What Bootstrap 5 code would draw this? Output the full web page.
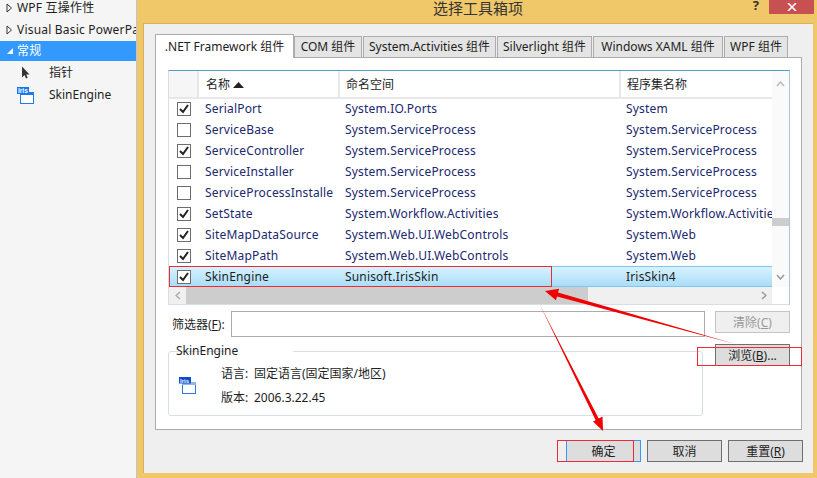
<!DOCTYPE html>
<html lang="zh"><head><meta charset="utf-8"><title>选择工具箱项</title>
<link href="https://cdn.jsdelivr.net/npm/bootstrap@5.3.0/dist/css/bootstrap.min.css" rel="stylesheet">
<script src="https://cdn.jsdelivr.net/npm/bootstrap@5.3.0/dist/js/bootstrap.bundle.min.js"></script>
<style>
html,body{height:478px;overflow:hidden}
body{width:817px;font:12px/16px "Noto Sans","Noto Sans CJK SC",sans-serif;color:#1e1e1e;background:#f0c869;position:relative}
.side{width:137px;flex:none;background:#f5f5f5;border-right:1px solid #c4c4c4;color:#1e1e1e;white-space:nowrap;overflow:hidden;margin-top:0;padding-top:0}
.side-row{height:22px;display:flex;align-items:center;padding-left:6px;letter-spacing:.2px}
.side-row:first-child{margin-top:-4px;height:23px}
.side-row.on{background:#3399ff;color:#fff;height:20px}
.side-tri{width:11px;flex:none;display:flex}
.side-leaf{padding-left:17px;letter-spacing:0}
.side-leaf.tall{height:23px}
.side-ico{width:32px;flex:none;display:flex}
.win{flex:1;min-width:0;padding:23px 4px 5px 6px;position:relative}
.win-title{position:absolute;top:0;left:0;right:0;height:17px;text-align:center;font-size:15px;line-height:17px;color:#333;padding-left:2px}
.win-help{position:absolute;top:-3px;right:58px;font-weight:700;font-size:13px;color:#333}
.win-close{position:absolute;top:0;right:3px;width:45px;height:14px;background:#c75050;display:flex;align-items:center;justify-content:center}
.client{height:100%;background:#efefef;border:1px solid #d8b25a;border-width:1px 0 0 1px;padding:12px 11px 0 11px}
.tabs.nav-tabs{border:0;flex-wrap:nowrap;height:21px;position:relative;z-index:1}
.tabs .nav-link{height:21px;padding:0 0;margin:0 1px 0 0;border:1px solid #acacac;border-bottom:0;border-radius:0;background:#e4e4e4;color:#1e1e1e;line-height:19px;text-align:center;font-size:12px}
.tabs .nav-link.active{height:24px;margin-top:-2px;border-color:#acacac;background:#fff;color:#1e1e1e;line-height:23px;border-bottom:0}
.panel-box{height:373px;width:647px;background:#fff;border:1px solid #acacac;padding:12px 12px 0 12px}
.lst{height:235px;width:622px;border:1px solid #569ac7;border-bottom-color:#d5dfe5;border-left-color:#d5dfe5;border-right-color:#abc6da;display:grid;grid-template-columns:1fr 17px;grid-template-rows:1fr 17px}
.grid-clip{overflow:hidden;min-width:0}
.tbl.table{table-layout:fixed;width:603px;margin:0;font-size:12px;color:#1e1e1e;--bs-table-bg:transparent}
.tbl th{height:27px;padding:1px 0 0 6px;font-weight:400;border:0;border-right:2px solid #e8e8e8;border-bottom:2px solid #e8e8e8;vertical-align:middle;white-space:nowrap}
.tbl th:first-child{background:#f6f6f6}
.tbl td{height:21px;padding:0 0 0 6px;border:0;color:#20286e;white-space:nowrap;overflow:hidden;vertical-align:middle;line-height:20px;letter-spacing:.17px}
.tbl tr>*:nth-child(2){padding-left:7px}
.tbl .chk{padding:0 0 0 1px;text-align:center}
.tbl tr.sel td{background:linear-gradient(#d9f3fe,#a8dcf8);box-shadow:inset 0 1px 0 #7fc4f4,inset 0 -1px 0 #7fc4f4;color:#1e1e1e}
.cb{display:inline-block;width:14px;height:14px;border:1px solid #6d6d6d;background:#fff;vertical-align:middle;margin-top:-1px}
.cb svg{display:block}
.sb{background:#f0f0f0;display:flex;min-height:0;min-width:0}
.sb-v{flex-direction:column;align-items:center;justify-content:flex-start;position:relative;background:#fafafa}
.sb-btn{flex:none;display:flex;align-items:center;justify-content:center}
.sb-thumb{background:#cdcdcd}
.corner{background:#fff}
.filt-wrap{display:flex;gap:10px;margin-top:6px;width:622px}
.filt-left{width:537px;flex:none}
.filt-line{display:flex;align-items:center;height:26px;padding-left:4px}
.filt-line label{width:59px;flex:none;padding-top:2px}
.filt-line .form-control{width:474px;flex:none;height:26px;border:1px solid #acacac;border-radius:0;padding:0 4px;font-size:12px;margin-right:-2px}
u{text-underline-offset:1px}
.grp{margin:6px 2px 0 0;height:73px;border:1px solid #d5dfe5;border-radius:3px;padding:0 0 0 52px;position:relative}
.grp legend{float:none;width:auto;font-size:12px;line-height:16px;margin:0 0 7px 4px;padding:0 3px;color:#1e1e1e;position:relative;left:-52px}
.grp-ico{position:absolute;left:10px;top:11px;display:flex}
.grp p{margin:0 0 8px;line-height:16px;display:flex;color:#1e1e1e}
.grp p span:first-child{width:33px;flex:none}
.sidebtns{display:flex;flex-direction:column;gap:11px;width:75px}
.vsbtn.btn{width:75px;height:22px;padding:1px 0 0;border:1px solid #707070;border-radius:0;background:#ddd;color:#1e1e1e;font-size:12px;line-height:18px}
.vsbtn.btn:disabled,.vsbtn.btn.disabled{background:#efefef;border-color:#c4c4c4;color:#9a9a9a;opacity:1}
.foot{display:flex;justify-content:flex-end;gap:6px;margin-top:10px;width:648px}
.vsbtn.btn.focus-btn{border-color:#3399ff}
.marks{position:absolute;left:0;top:0;width:817px;height:478px;pointer-events:none}
</style></head>
<body class="d-flex">
<aside class="side">
  <div class="side-row"><span class="side-tri"><svg width="7" height="10"><path d="M1 1v8l4.500-4z" fill="#fff" stroke="#333"/></svg></span>WPF 互操作性</div>
  <div class="side-row"><span class="side-tri"><svg width="7" height="10"><path d="M1 1v8l4.500-4z" fill="#fff" stroke="#333"/></svg></span>Visual Basic PowerPacks</div>
  <div class="side-row on"><span class="side-tri"><svg width="8" height="8"><path d="M1 7h6V1z" fill="#fff"/></svg></span>常规</div>
  <div class="side-row side-leaf tall"><span class="side-ico"><svg width="16" height="16"><path d="M5 1.500v11l2.500-2.500 1.500 3.500 1.700-.8-1.500-3.200h3.300z" fill="#333"/></svg></span>指针</div>
  <div class="side-row side-leaf"><span class="side-ico"><svg width="17" height="17" viewBox="0 0 17 17"><rect x="3.500" y="5.500" width="13" height="11" fill="#fff" stroke="#1f7be8"/><rect x="3" y="5" width="14" height="3" fill="#1f7be8"/><rect x="0" y="0" width="12" height="7" fill="#1478f0"/><text x="1" y="6" font-size="6.500" font-weight="700" fill="#fff" font-family="Liberation Sans">Iris</text></svg></span>SkinEngine</div>
</aside>
<main class="win">
  <div class="win-title">选择工具箱项</div>
  <div class="win-help">?</div>
  <div class="win-close"><svg width="10" height="8"><path d="M1 0l8 8M9 0l-8 8" stroke="#fff" stroke-width="1.600"/></svg></div>
  <div class="client">
    <ul class="nav nav-tabs tabs">
      <li class="nav-item"><a class="nav-link active" style="width:139px;margin-right:0" href="#">.NET Framework 组件</a></li>
      <li class="nav-item"><a class="nav-link" style="width:68px" href="#">COM 组件</a></li>
      <li class="nav-item"><a class="nav-link" style="width:133px" href="#">System.Activities 组件</a></li>
      <li class="nav-item"><a class="nav-link" style="width:95px" href="#">Silverlight 组件</a></li>
      <li class="nav-item"><a class="nav-link" style="width:130px" href="#">Windows XAML 组件</a></li>
      <li class="nav-item"><a class="nav-link" style="width:64px" href="#">WPF 组件</a></li>
    </ul>
    <section class="panel-box">
      <div class="lst">
        <div class="grid-clip">
        <table class="table tbl">
          <colgroup><col style="width:29px"><col style="width:141px"><col style="width:281px"><col style="width:152px"></colgroup>
          <thead><tr><th></th><th>名称 <svg width="11" height="6"><path d="M0 6l5.500-6 5.500 6z" fill="#222"/></svg></th><th>命名空间</th><th class="border-end-0">程序集名称</th></tr></thead>
          <tbody>
            <tr><td class="chk"><span class="cb"><svg width="12" height="12"><path d="M2 6l3 3 5-7" fill="none" stroke="#222" stroke-width="2"/></svg></span></td><td>SerialPort</td><td>System.IO.Ports</td><td>System</td></tr>
            <tr><td class="chk"><span class="cb"></span></td><td>ServiceBase</td><td>System.ServiceProcess</td><td>System.ServiceProcess</td></tr>
            <tr><td class="chk"><span class="cb"><svg width="12" height="12"><path d="M2 6l3 3 5-7" fill="none" stroke="#222" stroke-width="2"/></svg></span></td><td>ServiceController</td><td>System.ServiceProcess</td><td>System.ServiceProcess</td></tr>
            <tr><td class="chk"><span class="cb"></span></td><td>ServiceInstaller</td><td>System.ServiceProcess</td><td>System.ServiceProcess</td></tr>
            <tr><td class="chk"><span class="cb"></span></td><td>ServiceProcessInstalle</td><td>System.ServiceProcess</td><td>System.ServiceProcess</td></tr>
            <tr><td class="chk"><span class="cb"><svg width="12" height="12"><path d="M2 6l3 3 5-7" fill="none" stroke="#222" stroke-width="2"/></svg></span></td><td>SetState</td><td>System.Workflow.Activities</td><td>System.Workflow.Activities</td></tr>
            <tr><td class="chk"><span class="cb"><svg width="12" height="12"><path d="M2 6l3 3 5-7" fill="none" stroke="#222" stroke-width="2"/></svg></span></td><td>SiteMapDataSource</td><td>System.Web.UI.WebControls</td><td>System.Web</td></tr>
            <tr><td class="chk"><span class="cb"><svg width="12" height="12"><path d="M2 6l3 3 5-7" fill="none" stroke="#222" stroke-width="2"/></svg></span></td><td>SiteMapPath</td><td>System.Web.UI.WebControls</td><td>System.Web</td></tr>
            <tr class="sel"><td class="chk"><span class="cb"><svg width="12" height="12"><path d="M2 6l3 3 5-7" fill="none" stroke="#222" stroke-width="2"/></svg></span></td><td>SkinEngine</td><td>Sunisoft.IrisSkin</td><td>IrisSkin4</td></tr>
          </tbody>
        </table>
        </div>
        <div class="sb sb-v">
          <div class="sb-btn" style="height:26px"><svg width="9" height="6"><path d="M1 5l3.500-4 3.500 4" fill="none" stroke="#bbb" stroke-width="1.500"/></svg></div>
          <div class="flex-grow-1 w-100 d-flex flex-column"><div style="height:121px"></div><div class="sb-thumb" style="height:8px"></div></div>
          <div class="sb-btn" style="height:20px"><svg width="9" height="6"><path d="M1 1l3.500 4 3.500-4" fill="none" stroke="#999" stroke-width="1.500"/></svg></div>
        </div>
        <div class="sb">
          <div class="sb-btn" style="width:17px"><svg width="6" height="9"><path d="M5 1l-4 3.500 4 3.500" fill="none" stroke="#aaa" stroke-width="1.500"/></svg></div>
          <div class="sb-thumb" style="width:402px"></div>
          <div class="flex-grow-1"></div>
          <div class="sb-btn" style="width:17px"><svg width="6" height="9"><path d="M1 1l4 3.500-4 3.500" fill="none" stroke="#999" stroke-width="1.500"/></svg></div>
        </div>
        <div class="corner"></div>
      </div>
      <div class="filt-wrap">
        <div class="filt-left">
          <div class="filt-line"><label for="flt">筛选器(<u>F</u>):</label><input id="flt" class="form-control" type="text"></div>
          <fieldset class="grp">
            <legend>SkinEngine</legend>
            <span class="grp-ico"><svg width="17" height="17" viewBox="0 0 17 17"><rect x="3.500" y="5.500" width="13" height="11" fill="#fff" stroke="#2a7ae0"/><rect x="3" y="5" width="14" height="3" fill="#8db8ea"/><rect x="0" y="0" width="12" height="6.500" fill="#0f4cc8"/><text x="1" y="5.800" font-size="6" font-weight="700" fill="#fff" font-family="Liberation Sans">Iris</text></svg></span>
            <p><span>语言:</span><span>固定语言(固定国家/地区)</span></p>
            <p><span>版本:</span><span>2006.3.22.45</span></p>
          </fieldset>
        </div>
        <div class="sidebtns">
          <button class="btn vsbtn" disabled>清除(<u>C</u>)</button>
          <button class="btn vsbtn">浏览(<u>B</u>)...</button>
        </div>
      </div>
    </section>
    <div class="foot">
      <button class="btn vsbtn focus-btn">确定</button>
      <button class="btn vsbtn">取消</button>
      <button class="btn vsbtn">重置(<u>R</u>)</button>
    </div>
  </div>
</main>
<svg class="marks" viewBox="0 0 817 478">
  <g fill="none" stroke="#ee2a35" stroke-width="1">
    <rect x="169.500" y="266.500" width="382" height="20"/>
    <rect x="697.500" y="347.500" width="104" height="18"/>
    <rect x="557.500" y="440.500" width="76" height="21"/>
  </g>
  <path d="M735 344L558 292.600L559.100 288.700L545 291L555.900 300.300L557 296.400Z" fill="#f00000"/>
  <path d="M540 305L598.700 418.600L602.500 416.500L603 431L593 421.600L595.700 420.200Z" fill="#f00000"/>
</svg>
</body></html>
